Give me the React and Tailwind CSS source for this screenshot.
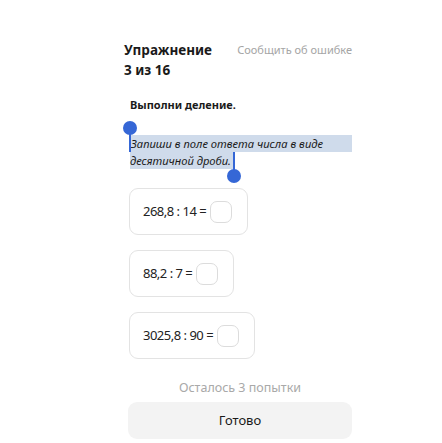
import React from "react";

function Card({ expr }) {
  return (
    <div className="self-start flex items-center border border-[#e3e3e3] rounded-[9px] pl-[13px] pr-[15px] h-[47px]">
      <span className="text-[13px] tracking-[-0.5px] text-[#222]">{expr}</span>
      <div className="ml-[4px] w-[22px] h-[22px] border border-[#dcdcdc] rounded-[7px]" />
    </div>
  );
}

export default function App() {
  return (
    <div className="w-[442px] h-[443px] bg-white overflow-hidden" style={{ fontFamily: '"Noto Sans", sans-serif' }}>
      <div className="pl-[124px] pt-[40px]">
        <div className="flex items-start justify-between w-[228px]">
          <div className="text-[13.5px] leading-[20px] font-bold text-[#1a1a1a] w-[96px]">Упражнение 3 из 16</div>
          <div className="text-[11px] leading-[20px] text-[#a5a5a5]">Сообщить об ошибке</div>
        </div>
        <div className="mt-[16px] ml-[6px] text-[11px] leading-[18px] font-bold text-[#1a1a1a]">Выполни деление.</div>
        <div className="relative mt-[21px] ml-[6px] w-[222px] text-[11.2px] leading-[17px] italic text-[#1a1a1a]">
          <div className="bg-[#cfdbeb] h-[17px] pl-[1px] whitespace-nowrap">Запиши в поле ответа числа в виде</div>
          <div className="bg-[#cfdbeb] h-[17px] w-[104px] whitespace-nowrap">десятичной дроби.</div>
          <div className="absolute left-[-7px] top-[-14px] w-[14px] h-[14px] rounded-full bg-[#3567d6]" />
          <div className="absolute left-[-1px] top-[-2px] w-[2px] h-[19px] bg-[#3567d6]" />
          <div className="absolute left-[103px] top-[17px] w-[2px] h-[19px] bg-[#3567d6]" />
          <div className="absolute left-[97px] top-[34px] w-[14px] h-[14px] rounded-full bg-[#3567d6]" />
        </div>
        <div className="ml-[5px] mt-[19px] flex flex-col gap-[15px]">
          <Card expr="268,8 : 14 =" />
          <Card expr="88,2 : 7 =" />
          <Card expr="3025,8 : 90 =" />
        </div>
        <div className="ml-[4px] w-[224px] mt-[19px] text-center text-[12.5px] leading-[20px] text-[#a9a9a9]">Осталось 3 попытки</div>
        <div className="ml-[4px] mt-[4px] w-[224px] h-[37px] rounded-[9px] bg-[#f3f3f3] flex items-center justify-center text-[13px] text-[#1a1a1a]">Готово</div>
      </div>
    </div>
  );
}
